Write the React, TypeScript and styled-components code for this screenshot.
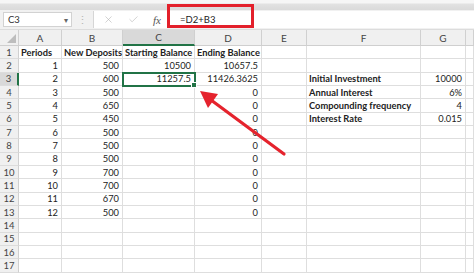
import React from "react";
import styled, {createGlobalStyle} from "styled-components";
import {X, Check} from "lucide-react";

const GlobalStyle = createGlobalStyle`
  html, body {
    margin: 0;
    padding: 0;
    background: #ffffff;
    overflow: hidden;
  }
`;

const COLS = ["A", "B", "C", "D", "E", "F", "G", ""];

type Value = string | number;

const ROWS: Value[][] = [
  ["Periods", "New Deposits", "Starting Balance", "Ending Balance"],
  [1, 500, 10500, 10657.5],
  [2, 600, 11257.5, 11426.3625, "", "Initial Investment", 10000],
  [3, 500, "", 0, "", "Annual Interest", "6%"],
  [4, 650, "", 0, "", "Compounding frequency", 4],
  [5, 450, "", 0, "", "Interest Rate", 0.015],
  [6, 500, "", 0],
  [7, 500, "", 0],
  [8, 500, "", 0],
  [9, 700, "", 0],
  [10, 700, "", 0],
  [11, 670, "", 0],
  [12, 500, "", 0],
  [],
  [],
  [],
  [],
];

const SELECTED = {row: 3, col: 2};

const isNumeric = (v: Value) => typeof v === "number" || /^[\d.]+%?$/.test(v);

const App: React.FC = () => {
  return (
    <Page>
      <GlobalStyle/>
      <TopBand/>
      <FormulaBar>
        <NameBox>
          <span>C3</span>
          <Caret>▾</Caret>
        </NameBox>
        <Grip>⋮</Grip>
        <InputArea>
          <Actions>
            <X size={11} strokeWidth={1.3}/>
            <Check size={11} strokeWidth={1.3}/>
            <Fx>fx</Fx>
          </Actions>
          <Formula>=D2+B3</Formula>
        </InputArea>
      </FormulaBar>
      <Sheet>
        <Corner>
          <svg width="9" height="9" viewBox="0 0 9 9">
            <polygon points="9,0 9,9 0,9" fill="#bdbdbd"/>
          </svg>
        </Corner>
        {COLS.map((c, i) => (
          <ColHead key={c + i} $active={i === SELECTED.col}>{c}</ColHead>
        ))}
        {ROWS.map((row, r) => (
          <React.Fragment key={r}>
            <RowHead $active={r + 1 === SELECTED.row}>{r + 1}</RowHead>
            {COLS.map((_, c) => {
              const v = row[c] ?? "";
              return (
                <Cell
                  key={c}
                  $num={v !== "" && isNumeric(v)}
                  $bold={r === 0 || c === 5}
                  $selected={r + 1 === SELECTED.row && c === SELECTED.col}
                >
                  {v}
                </Cell>
              );
            })}
          </React.Fragment>
        ))}
      </Sheet>
      <Highlight/>
      <Arrow width="474" height="273" viewBox="0 0 474 273">
        <line x1="284" y1="154" x2="211" y2="100" stroke="#e5232d" strokeWidth="3.2" strokeLinecap="round"/>
        <polygon points="200,91 218,94 208,108" fill="#e5232d"/>
      </Arrow>
    </Page>
  );
};

const Page = styled.div`
  position: relative;
  width: 474px;
  height: 273px;
  overflow: hidden;
  font-family: Lato, "Open Sans", sans-serif;
  color: #222;
`;

const TopBand = styled.div`
  height: 10px;
  background: linear-gradient(#f6f6f6 0, #f6f6f6 3px, #e2e2e2 4px, #dadada 10px);
`;

const FormulaBar = styled.div`
  display: flex;
  align-items: center;
  height: 20px;
  background: #f1f1f1;
  border-bottom: 1px solid #dcdcdc;
  box-sizing: border-box;
`;

const NameBox = styled.div`
  display: flex;
  align-items: center;
  justify-content: space-between;
  margin-left: 3px;
  width: 69px;
  height: 15px;
  box-sizing: border-box;
  padding: 0 3px 0 4px;
  background: #fff;
  border: 1px solid #d2d2d2;
  font-size: 9.5px;
  color: #333;
`;

const Caret = styled.span`
  font-size: 8px;
  color: #666;
`;

const Grip = styled.span`
  width: 21px;
  text-align: center;
  font-size: 11px;
  color: #b5b5b5;
`;

const InputArea = styled.div`
  flex: 1;
  display: flex;
  align-items: center;
  height: 17px;
  background: #fff;
  border-left: 1px solid #d6d6d6;
`;

const Actions = styled.div`
  display: flex;
  align-items: center;
  gap: 14px;
  width: 74px;
  padding-left: 9px;
  box-sizing: border-box;
  color: #b4b4b4;
`;

const Fx = styled.span`
  font-family: "Liberation Serif", serif;
  font-style: italic;
  font-size: 11px;
  color: #555;
`;

const Formula = styled.span`
  padding-left: 12px;
  font-size: 9.5px;
  color: #222;
`;

const Sheet = styled.div`
  display: grid;
  grid-template-columns: 19px 43px 61px 72px 67px 45px 114px 45px 1fr;
  grid-template-rows: 16px repeat(17, 13.33px);
`;

const HeadBase = styled.div`
  display: flex;
  align-items: center;
  justify-content: center;
  background: #f0f0f0;
  color: #444;
  font-size: 10px;
  box-sizing: border-box;
  border-right: 1px solid #d0d0d0;
  border-bottom: 1px solid #cfcfcf;
`;

const Corner = styled(HeadBase)`
  align-items: flex-end;
  justify-content: flex-end;
  padding: 0 2px 2px 0;
`;

const ColHead = styled(HeadBase)<{ $active?: boolean }>`
  background: ${({$active}) => ($active ? "#d9d9d9" : "#f0f0f0")};
  border-bottom: ${({$active}) => ($active ? "2px solid #217346" : "1px solid #cfcfcf")};
`;

const RowHead = styled(HeadBase)<{ $active?: boolean }>`
  font-size: 9.5px;
  background: ${({$active}) => ($active ? "#d9d9d9" : "#f0f0f0")};
  border-right: ${({$active}) => ($active ? "2px solid #217346" : "1px solid #d0d0d0")};
  border-bottom: 1px solid #dcdcdc;
`;

const Cell = styled.div<{ $num?: boolean; $bold?: boolean; $selected?: boolean }>`
  position: relative;
  display: flex;
  align-items: center;
  justify-content: ${({$num}) => ($num ? "flex-end" : "flex-start")};
  padding: 0 3px 0 2px;
  box-sizing: border-box;
  min-width: 0;
  white-space: nowrap;
  font-size: 9.3px;
  font-weight: ${({$bold}) => ($bold ? 700 : 400)};
  border-right: 1px solid #dedede;
  border-bottom: 1px solid #dedede;
  ${({$selected}) =>
    $selected &&
    `
    z-index: 1;
    outline: 2px solid #217346;
    outline-offset: -1px;
    &::after {
      content: "";
      position: absolute;
      right: -3px;
      bottom: -3px;
      width: 4px;
      height: 4px;
      background: #217346;
      border: 1px solid #fff;
    }
  `}
`;

const Highlight = styled.div`
  position: absolute;
  left: 167px;
  top: 4px;
  width: 87px;
  height: 24px;
  box-sizing: border-box;
  border: 3px solid #e3202b;
`;

const Arrow = styled.svg`
  position: absolute;
  left: 0;
  top: 0;
  pointer-events: none;
`;

export default App;
